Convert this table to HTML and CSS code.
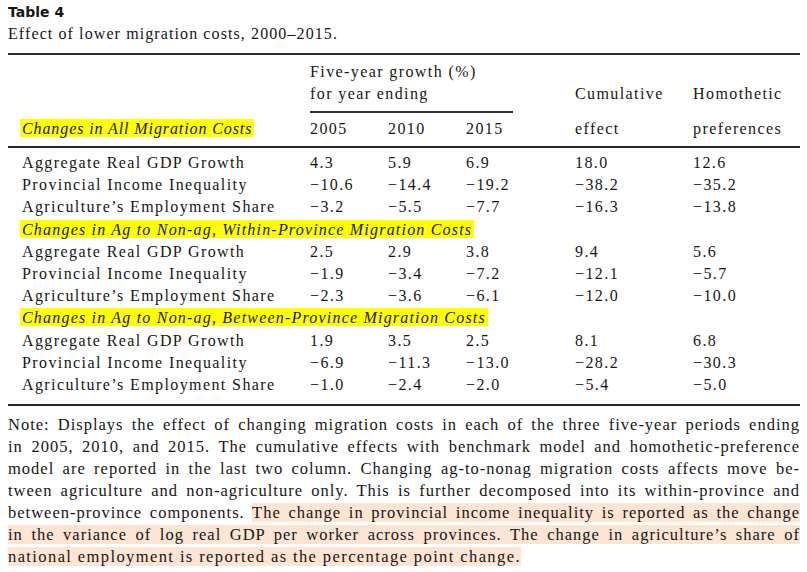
FILE: index.html
```html
<!DOCTYPE html>
<html>
<head>
<meta charset="utf-8">
<link rel="stylesheet" href="styles.css">
</head>
<body>
<div class="page">
  <div class="title">Table 4</div>
  <div class="caption">Effect of lower migration costs, 2000–2015.</div>
  <table class="tbl">
    <colgroup>
      <col class="c-label"><col class="c-y"><col class="c-y"><col class="c-y2"><col class="c-cum"><col class="c-hom">
    </colgroup>
    <thead>
      <tr class="h1">
        <th></th>
        <th colspan="3" class="span"><div class="grp">Five-year growth (%)<br>for year ending</div></th>
        <th class="side">Cumulative</th>
        <th class="side">Homothetic</th>
      </tr>
      <tr class="h2">
        <th class="lab"><span class="hl it head-hl">Changes in All Migration Costs</span></th>
        <th>2005</th><th>2010</th><th>2015</th>
        <th>effect</th><th>preferences</th>
      </tr>
    </thead>
    <tbody>
      <tr class="first"><td class="lab">Aggregate Real GDP Growth</td><td>4.3</td><td>5.9</td><td>6.9</td><td>18.0</td><td>12.6</td></tr>
      <tr><td class="lab">Provincial Income Inequality</td><td>−10.6</td><td>−14.4</td><td>−19.2</td><td>−38.2</td><td>−35.2</td></tr>
      <tr><td class="lab">Agriculture’s Employment Share</td><td>−3.2</td><td>−5.5</td><td>−7.7</td><td>−16.3</td><td>−13.8</td></tr>
      <tr><td class="lab sec" colspan="6"><span class="hl it">Changes in Ag to Non-ag, Within-Province Migration Costs</span></td></tr>
      <tr><td class="lab">Aggregate Real GDP Growth</td><td>2.5</td><td>2.9</td><td>3.8</td><td>9.4</td><td>5.6</td></tr>
      <tr><td class="lab">Provincial Income Inequality</td><td>−1.9</td><td>−3.4</td><td>−7.2</td><td>−12.1</td><td>−5.7</td></tr>
      <tr><td class="lab">Agriculture’s Employment Share</td><td>−2.3</td><td>−3.6</td><td>−6.1</td><td>−12.0</td><td>−10.0</td></tr>
      <tr><td class="lab sec" colspan="6"><span class="hl it">Changes in Ag to Non-ag, Between-Province Migration Costs</span></td></tr>
      <tr><td class="lab">Aggregate Real GDP Growth</td><td>1.9</td><td>3.5</td><td>2.5</td><td>8.1</td><td>6.8</td></tr>
      <tr><td class="lab">Provincial Income Inequality</td><td>−6.9</td><td>−11.3</td><td>−13.0</td><td>−28.2</td><td>−30.3</td></tr>
      <tr class="last"><td class="lab">Agriculture’s Employment Share</td><td>−1.0</td><td>−2.4</td><td>−2.0</td><td>−5.4</td><td>−5.0</td></tr>
    </tbody>
  </table>
  <div class="note">
    <span class="ln">Note: Displays the effect of changing migration costs in each of the three five-year periods ending</span>
    <span class="ln">in 2005, 2010, and 2015. The cumulative effects with benchmark model and homothetic-preference</span>
    <span class="ln">model are reported in the last two column. Changing ag-to-nonag migration costs affects move be-</span>
    <span class="ln">tween agriculture and non-agriculture only. This is further decomposed into its within-province and</span>
    <span class="ln">between-province components. <span class="peach">The change in provincial income inequality is reported as the change</span></span>
    <span class="ln"><span class="peach">in the variance of log real GDP per worker across provinces. The change in agriculture’s share of</span></span>
    <span class="ln end"><span class="peach">national employment is reported as the percentage point change.</span></span>
  </div>
</div>
</body>
</html>
```

FILE: styles.css
```css
html, body {
  margin: 0;
  padding: 0;
  background: #ffffff;
}
.page {
  padding: 1px 7px 0 8px;
  color: #161616;
  font-family: "Liberation Serif", "Times New Roman", serif;
}
.title {
  font-family: "DejaVu Sans", sans-serif;
  font-weight: bold;
  font-size: 14px;
  line-height: 22px;
}
.caption {
  font-size: 16px;
  letter-spacing: 1.1px;
  line-height: 22px;
}
.tbl {
  width: 792px;
  margin-top: 8px;
  border-collapse: collapse;
  table-layout: fixed;
  font-size: 16px;
  letter-spacing: 1.4px;
  border-top: 2px solid #2a2a2a;
  border-bottom: 2px solid #2a2a2a;
}
.c-label { width: 302px; }
.c-y { width: 78px; }
.c-y2 { width: 109px; }
.c-cum { width: 118px; }
.c-hom { width: 107px; }
.tbl th, .tbl td {
  padding: 0;
  text-align: left;
  font-weight: normal;
  vertical-align: bottom;
  white-space: nowrap;
}
.tbl td { height: 22.2px; line-height: 22.2px; }
.tbl .lab { padding-left: 14px; }
.h1 th {
  padding-top: 6px;
  line-height: 22px;
}
.h1 .side { padding-bottom: 8px; }
.grp {
  width: 203px;
  border-bottom: 2px solid #333;
  padding-bottom: 6px;
  line-height: 22px;
}
.h2 th {
  padding-top: 5px;
  padding-bottom: 6px;
  line-height: 22px;
  border-bottom: 2px solid #2a2a2a;
}
.tbl tr.first td { padding-top: 4px; }
.tbl tr.last td { padding-bottom: 8px; }
.hl {
  background: #ffff00;
  padding: 1px 2px 0 2px;
  margin-left: -2px;
  letter-spacing: 1.2px;
}
.hl.head-hl { letter-spacing: 0.9px; }
.it { font-style: italic; }
.note {
  width: 792px;
  margin-top: 8px;
  font-size: 16.5px;
  letter-spacing: 1px;
  word-spacing: -1.5px;
  line-height: 22px;
}
.ln {
  display: block;
  text-align: justify;
  text-align-last: justify;
  white-space: nowrap;
}
.ln.end {
  text-align-last: left;
  letter-spacing: 1.4px;
  word-spacing: 0;
}
.peach { background: #fde4d3; }
```
